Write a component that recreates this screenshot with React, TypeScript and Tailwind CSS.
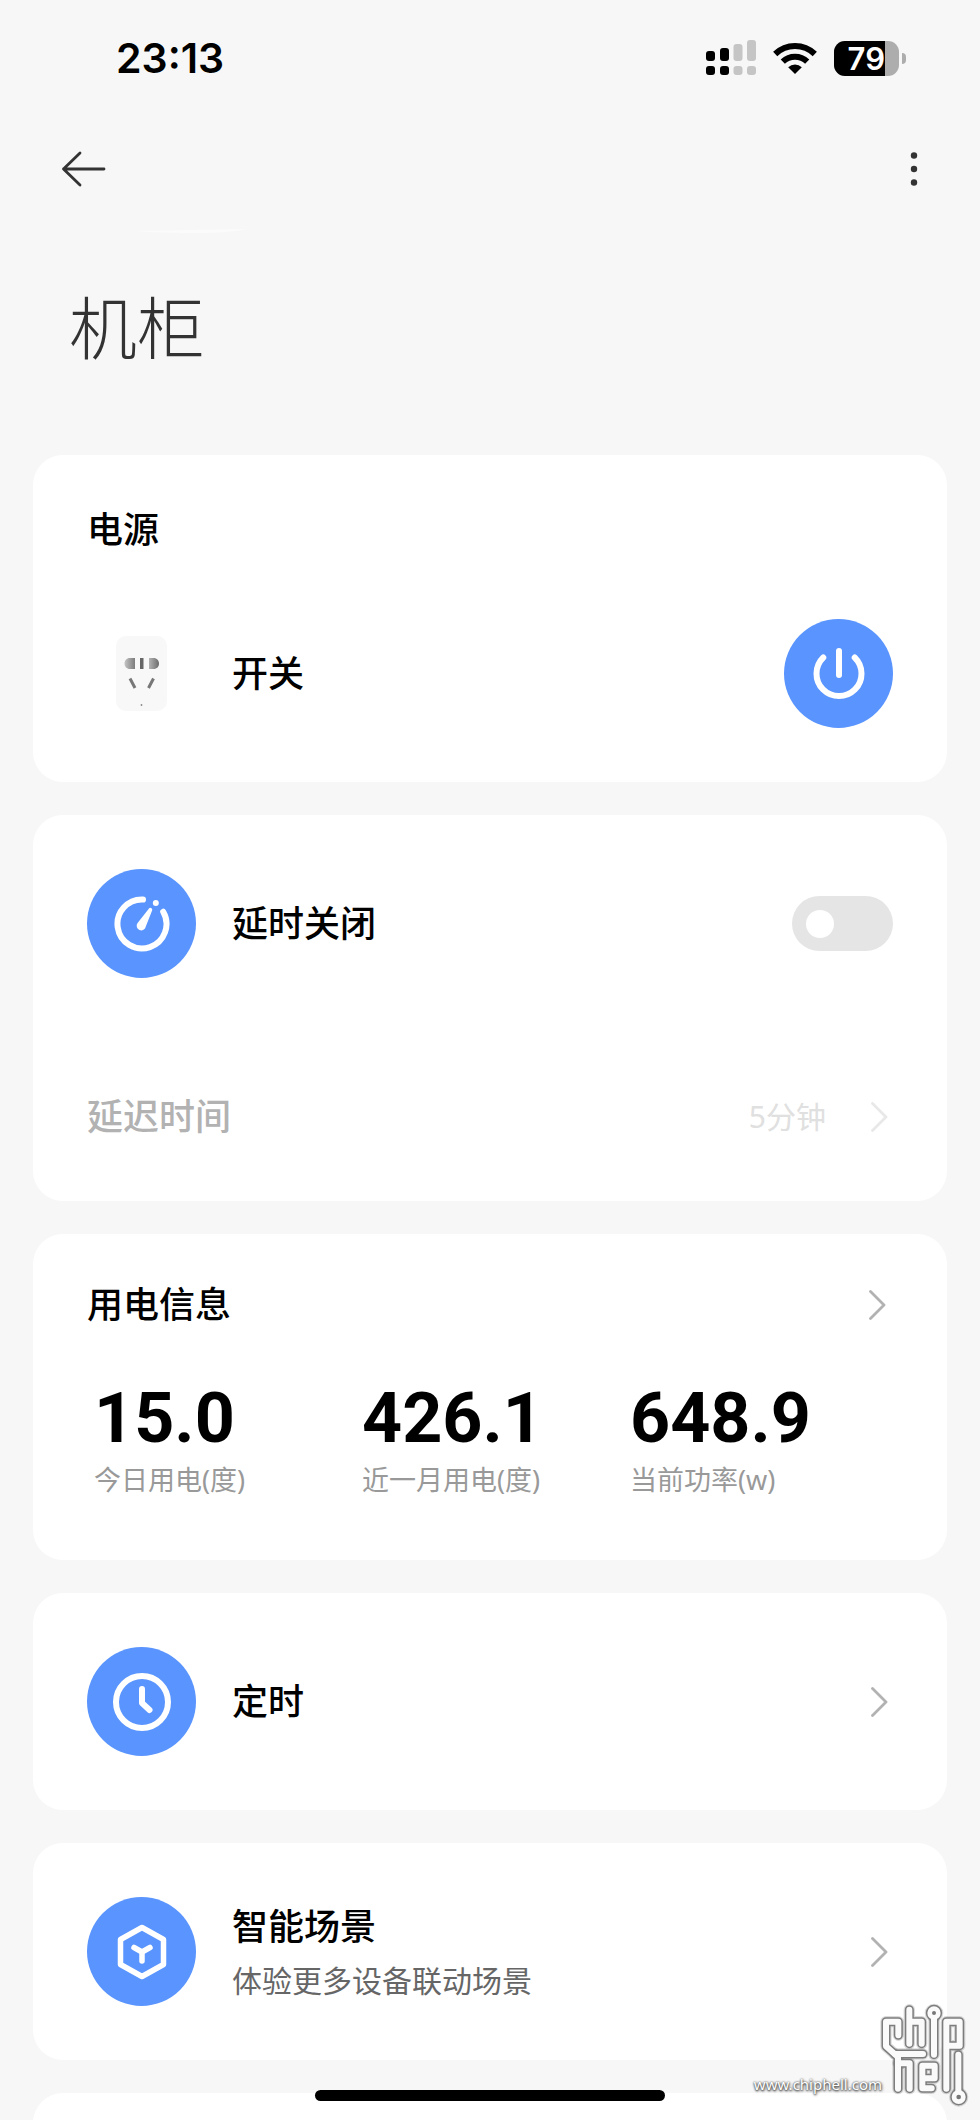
import { useState } from 'react';
import type { ReactNode } from 'react';

type Stat = {
  value: string;
  label: string;
};

const STATS: Stat[] = [
  { value: '15.0', label: '今日用电(度)' },
  { value: '426.1', label: '近一月用电(度)' },
  { value: '648.9', label: '当前功率(w)' },
];

const CARD = 'rounded-[30px] bg-white';
const TITLE = 'text-[36px] leading-[42px] font-medium text-black';

function StatusBar() {
  return (
    <div className="flex h-[116px] shrink-0 items-center justify-between pr-[74px] pl-[116px]">
      <span className="font-[Inter,sans-serif] text-[41px] leading-[48px] font-semibold text-black">23:13</span>
      <div className="flex items-center gap-[17px]">
        <svg width="50" height="36" viewBox="0 0 50 36" aria-hidden="true">
          <g fill="#000">
            <rect x="0" y="11" width="9" height="10" rx="3" />
            <rect x="14" y="8" width="9" height="13" rx="3" />
            <rect x="0" y="26" width="9" height="9" rx="3" />
            <rect x="14" y="26" width="9" height="9" rx="3" />
          </g>
          <g fill="#c5c5c5">
            <rect x="27.5" y="4" width="9" height="17" rx="3" />
            <rect x="41" y="0" width="9" height="21" rx="3" />
            <rect x="27.5" y="26" width="9" height="9" rx="3" />
            <rect x="41" y="26" width="9" height="9" rx="3" />
          </g>
        </svg>
        <svg width="44" height="34" viewBox="0 0 44 34" aria-hidden="true">
          <g fill="none" stroke="#000" strokeWidth="6">
            <path d="M2.2 13 A28.5 28.5 0 0 1 41.8 13" />
            <path d="M9.8 20.6 A17.6 17.6 0 0 1 34.2 20.6" />
          </g>
          <path d="M22 33 L15.2 26.2 A10 10 0 0 1 28.8 26.2 Z" fill="#000" />
        </svg>
        <div className="flex items-center gap-[3px]">
          <div className="flex h-[35px] w-[65px] overflow-hidden rounded-[11px] bg-[#adadad]">
            <div className="flex w-[51px] items-center justify-end bg-black font-[Inter,sans-serif] text-[31px] leading-[35px] font-semibold text-white">
              79
            </div>
          </div>
          <div className="h-[11px] w-1 rounded-r-full bg-[#adadad]" />
        </div>
      </div>
    </div>
  );
}

function Chevron({ className }: { className: string }) {
  return (
    <svg width="17" height="30" viewBox="0 0 17 30" className={className} aria-hidden="true">
      <path d="M1.5 1.5 L15 15 L1.5 28.5" fill="none" stroke="currentColor" strokeWidth="2.8" strokeLinecap="round" strokeLinejoin="round" />
    </svg>
  );
}

function Round({ children }: { children: ReactNode }) {
  return (
    <span className="flex size-[109px] shrink-0 items-center justify-center rounded-full bg-[#5994ff]">
      <svg width="60" height="60" viewBox="0 0 60 60" fill="none" stroke="#fff" strokeWidth="6" strokeLinecap="round" strokeLinejoin="round" aria-hidden="true">
        {children}
      </svg>
    </span>
  );
}

function Socket() {
  return (
    <span className="flex size-[109px] shrink-0 items-center justify-center">
      <svg width="51" height="75" viewBox="0 0 51 75" aria-hidden="true">
        <defs>
          <linearGradient id="left-slot" x1="0" x2="1">
            <stop offset="0" stopColor="#c4c4c4" />
            <stop offset="1" stopColor="#7c7c7c" />
          </linearGradient>
          <linearGradient id="right-slot" x1="0" x2="1">
            <stop offset="0" stopColor="#b4b4b4" />
            <stop offset="1" stopColor="#6c6c6c" />
          </linearGradient>
        </defs>
        <rect width="51" height="75" rx="10" fill="#f8f8f8" />
        <path d="M19 22 V33 H14 C10.5 33 8.5 30.5 8.5 27.5 C8.5 24.5 10.5 22 14 22 Z" fill="url(#left-slot)" />
        <rect x="24" y="22" width="3.5" height="11" fill="#666" />
        <path d="M33 22 V33 H37.5 C41 33 43 30.5 43 27.5 C43 24.5 41 22 37.5 22 Z" fill="url(#right-slot)" />
        <path d="M14 42.5 L19 52 M37.5 42.5 L32.5 52" stroke="#777" strokeWidth="3" />
        <circle cx="25.5" cy="69" r="0.9" fill="#888" />
      </svg>
    </span>
  );
}

function Watermark() {
  const lines = (
    <>
      <path d="M86 122 V81 H49 V155 L85 187 V282" />
      <path d="M76 178 H160" />
      <path d="M85 206 H120 V282" />
      <path d="M119 45 V147 M119 81 H156 V147" />
      <path d="M193 58 V180" />
      <path d="M230 282 V81 H270 V153 H232" />
      <path d="M186 281 H158 V213 H195 V251 H160" />
      <path d="M266 180 V305" />
      <circle cx="193" cy="55" r="11" />
      <circle cx="267" cy="307" r="12" />
    </>
  );
  return (
    <div className="pointer-events-none absolute right-3 bottom-3 flex items-end">
      <span className="mb-3 font-['Noto_Sans',sans-serif] text-[15px] leading-[24px] text-white [text-shadow:0_0_2px_#555,0_1px_2px_#555,1px_1px_3px_#666]">
        www.chiphell.com
      </span>
      <svg width="90" height="105" viewBox="25 25 270 315" fill="none" strokeLinejoin="round" className="-ml-1 overflow-visible" aria-hidden="true">
        <g stroke="#000" strokeOpacity="0.15" strokeWidth="34" strokeLinecap="round">{lines}</g>
        <g stroke="#7d7d7d" strokeWidth="27" strokeLinecap="round">{lines}</g>
        <g stroke="#fafafa" strokeWidth="18" strokeLinecap="round">{lines}</g>
        <circle cx="193" cy="55" r="6" fill="#777" />
        <circle cx="267" cy="307" r="7" fill="#777" />
      </svg>
    </div>
  );
}

export default function App() {
  const [power, setPower] = useState(true);
  const [delayOff, setDelayOff] = useState(false);

  return (
    <div className="relative flex h-screen flex-col overflow-hidden bg-[#f7f7f7] font-['Noto_Sans','Noto_Sans_CJK_SC',sans-serif]">
      <StatusBar />

      <header className="flex h-[105px] shrink-0 items-center justify-between px-[60px]">
        <button type="button" aria-label="返回">
          <svg width="46" height="38" viewBox="0 0 46 38" fill="none" stroke="#333" strokeWidth="2.8" strokeLinecap="round" strokeLinejoin="round">
            <path d="M44 19 H3.5 M20 3 L3.5 19 L20 35" />
          </svg>
        </button>
        <button type="button" aria-label="更多">
          <svg width="12" height="38" viewBox="0 0 12 38" fill="#333">
            <circle cx="6" cy="5.5" r="3.2" />
            <circle cx="6" cy="19" r="3.2" />
            <circle cx="6" cy="32.5" r="3.2" />
          </svg>
        </button>
      </header>

      {/* faint highlight under the nav bar */}
      <svg width="112" height="5" viewBox="0 0 112 5" className="mt-2 ml-[135px] shrink-0" aria-hidden="true">
        <path d="M0 2 L112 0 Q90 4 66 4 Q30 4 0 2 Z" fill="#fbfbfb" />
      </svg>

      <main className="flex min-h-0 flex-1 flex-col gap-[33px] overflow-y-auto px-[33px] [scrollbar-width:none]">
        <h1 className="mt-[47px] mb-[53px] pl-[36px] font-['Noto_Sans_CJK_SC',sans-serif] text-[68px] leading-[88px] font-light text-[#333]">
          机柜
        </h1>

        <section className={`${CARD} shrink-0 p-[54px]`}>
          <h2 className={TITLE}>电源</h2>
          <div className="mt-[68px] flex items-center gap-9">
            <Socket />
            <span className={`${TITLE} flex-1`}>开关</span>
            <button type="button" aria-label="开关" aria-pressed={power} onClick={() => setPower(!power)}>
              <Round>
                <path d="M14.3 13.5 A22.5 22.5 0 1 0 45.7 13.5" />
                <path d="M30 7 V31" />
              </Round>
            </button>
          </div>
        </section>

        <section className={`${CARD} shrink-0 p-[54px]`}>
          <label className="flex items-center gap-9">
            <Round>
              <path d="M31 5.5 A24.5 24.5 0 1 0 51.2 17.75" />
              <path d="M36.8 14.7 L25.6 29 A4.6 4.6 0 1 0 33.8 32.6 L40.2 16.3 A1.9 1.9 0 0 0 36.8 14.7 Z" fill="#fff" stroke="none" />
              <circle cx="43.8" cy="9" r="3" fill="#fff" stroke="none" />
            </Round>
            <span className={`${TITLE} flex-1`}>延时关闭</span>
            <input
              type="checkbox"
              role="switch"
              checked={delayOff}
              onChange={(e) => setDelayOff(e.target.checked)}
              className="h-[55px] w-[101px] appearance-none rounded-full bg-[#e5e5e5] p-[14px] before:block before:size-7 before:rounded-full before:bg-white checked:bg-[#5994ff] checked:before:ml-[45px]"
            />
          </label>
          <button type="button" disabled={!delayOff} className="mt-[109px] flex h-[60px] w-full items-center pr-[5px] text-left">
            <span className="flex-1 text-[36px] leading-[42px] font-medium text-[#b2b2b2]">延迟时间</span>
            <span className="mr-[45px] text-[30px] leading-[42px] text-[#e0e0e0]">5分钟</span>
            <Chevron className="text-[#e8e8e8]" />
          </button>
        </section>

        <section className={`${CARD} shrink-0 pt-[50px] pb-[58px]`}>
          <button type="button" className="flex w-full items-center justify-between pr-[61px] pl-[54px]">
            <span className={TITLE}>用电信息</span>
            <Chevron className="text-[#b2b2b2]" />
          </button>
          <dl className="mt-[52px] grid grid-cols-3 pr-[49px] pl-[61px]">
            {STATS.map((s) => (
              <div key={s.label} className="flex flex-col-reverse">
                <dt className="text-[27px] leading-[44px] text-[#999]">{s.label}</dt>
                <dd className="font-[Roboto,sans-serif] text-[70px] leading-[80px] font-bold text-black">{s.value}</dd>
              </div>
            ))}
          </dl>
        </section>

        <button type="button" className={`${CARD} flex shrink-0 items-center gap-9 p-[54px] pr-[59px] text-left`}>
          <Round>
            <circle cx="30" cy="30" r="26" />
            <path d="M30 17 V31 L37.5 38" />
          </Round>
          <span className={`${TITLE} flex-1`}>定时</span>
          <Chevron className="text-[#b2b2b2]" />
        </button>

        <button type="button" className={`${CARD} flex shrink-0 items-center gap-9 p-[54px] pr-[59px] text-left`}>
          <Round>
            <path d="M30 5.5 L51.5 17.5 V42.5 L30 54.5 L8.5 42.5 V17.5 Z" strokeWidth="5.5" />
            <path d="M22 25.5 L30 30 L38 25.5 M30 30 V39" strokeWidth="5.5" />
          </Round>
          <span className="flex flex-1 flex-col gap-3 pt-1">
            <span className={TITLE}>智能场景</span>
            <span className="text-[30px] leading-[42px] text-[#666]">体验更多设备联动场景</span>
          </span>
          <Chevron className="text-[#b2b2b2]" />
        </button>

        <section className={`${CARD} h-[217px] shrink-0`} />
      </main>

      <div className="pointer-events-none absolute inset-x-0 bottom-[19px] flex justify-center">
        <div className="h-[11px] w-[350px] rounded-full bg-black" />
      </div>
      <Watermark />
    </div>
  );
}
